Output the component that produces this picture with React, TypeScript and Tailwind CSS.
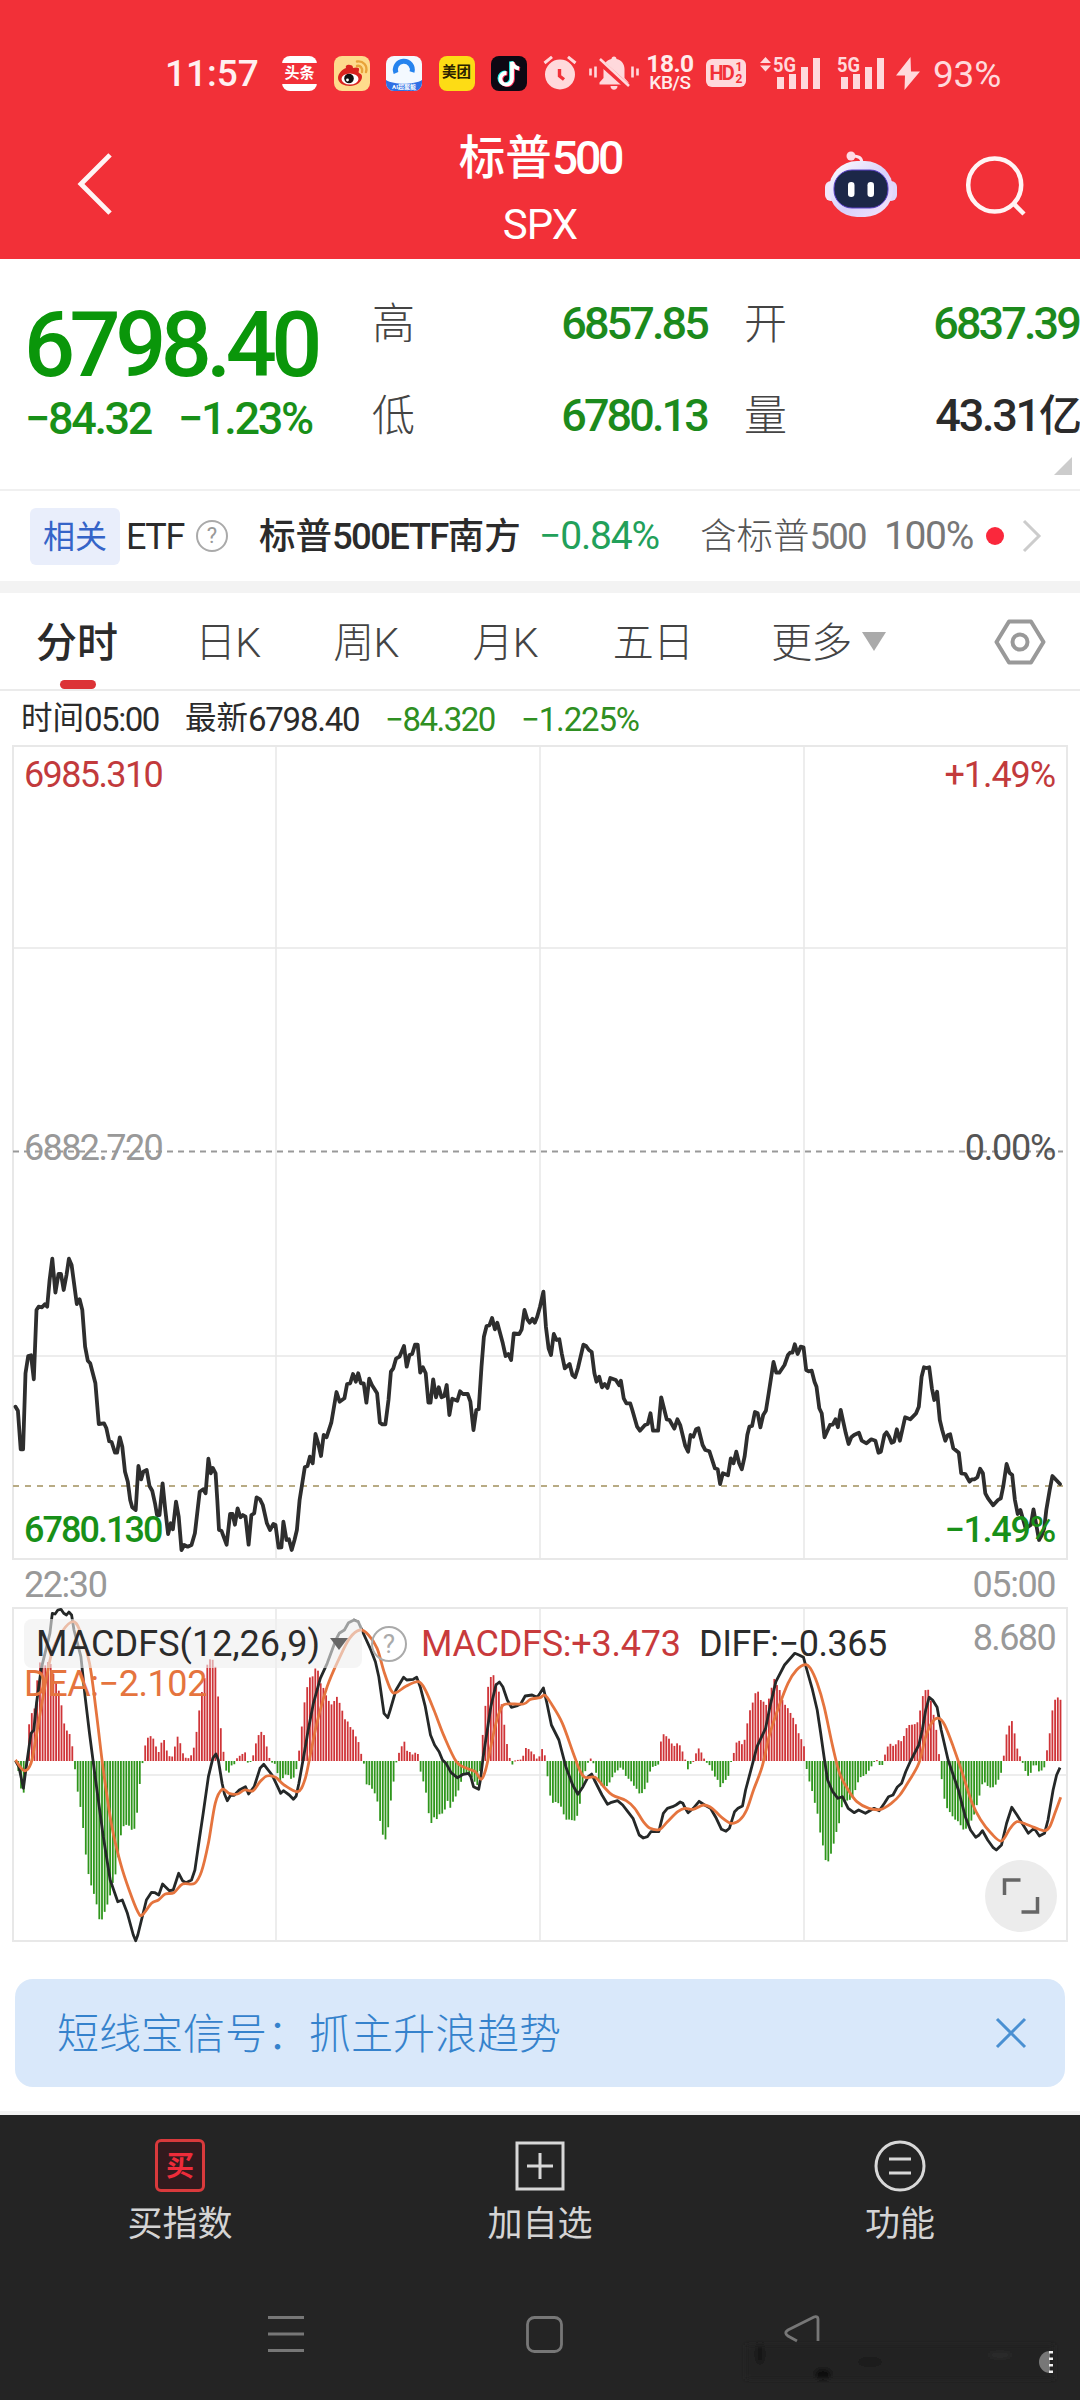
import type { ReactNode } from "react";

// trace points are "x,y" pairs; one unit is 1/2.904 px across and 1/3 px down
const HALF = 1568;
const SX = 1080 / 3136;
const SY = 1 / 3;

const priceAm =
  "45,620 52,632 60,748 67,748 74,520 82,468 90,466 98,538 106,330 112,320 122,322 130,313 137,320 144,240 152,176 161,278 170,222 177,222 185,270 193,225 200,176 208,195 223,312 231,298 239,330 247,440 255,482 262,490 277,550 287,672 302,670 309,685 317,724 324,726 334,758 340,758 348,712 355,740 363,815 371,845 378,900 384,922 394,930 402,798 410,838 416,815 426,810 434,858 442,872 450,910 456,945 463,945 472,850 480,930 488,1002 496,970 502,988 511,905 519,950 527,1050 535,1035 545,1040 556,1035 566,1000 580,875 590,868 597,880 605,776 612,820 618,804 626,820 631,900 636,990 643,992 658,1034 668,942 675,942 682,974 690,925 698,952 705,945 713,950 722,1034 730,945 738,940 745,892 755,898 763,915 775,970 784,990 794,972 800,975 809,1043 817,1042 823,965 832,1020 839,1018 847,1050 855,1020 862,990 870,900 885,802 893,798 900,770 908,790 916,702 924,730 932,768 940,705 948,712 962,668 977,576 986,605 1000,595 1008,552 1017,550 1025,522 1033,545 1040,520 1048,550 1056,550 1064,608 1072,536 1080,555 1095,580 1103,668 1110,673 1119,673 1128,600 1135,515 1142,505 1150,476 1160,470 1173,438 1181,500 1189,465 1197,462 1205,434 1213,434 1220,518 1228,502 1236,520 1244,608 1250,608 1258,538 1266,592 1274,562 1282,592 1290,588 1297,555 1305,645 1313,596 1328,602 1336,574 1344,582 1358,582 1366,605 1375,690 1383,630 1390,628 1398,500 1405,410 1413,378 1421,376 1429,354 1437,388 1444,368 1460,430 1468,468 1476,462 1484,480 1492,400 1508,402 1515,388 1523,330 1531,358 1538,368 1546,356 1553,368 1560,350";
const pricePm =
  "0,320 10,275 17,380 25,445 32,465 40,402 48,420 56,418 63,460 72,505 86,492 94,525 102,532 110,505 126,434 134,438 142,450 150,456 158,520 164,545 172,530 180,562 188,552 196,564 204,534 220,540 230,556 235,542 243,595 251,610 262,610 268,630 282,680 290,692 305,675 313,672 321,640 328,692 343,692 352,592 368,658 376,660 390,686 399,658 407,675 422,738 430,755 437,705 445,710 453,688 460,685 472,735 480,750 492,754 508,805 516,808 523,852 531,820 546,826 554,775 562,790 570,755 578,790 586,808 594,770 602,705 608,680 616,678 624,636 632,640 640,682 648,645 656,632 664,580 678,486 686,518 695,518 710,495 720,465 726,458 733,458 740,433 748,462 757,440 765,442 773,510 780,514 789,512 797,545 803,560 811,625 818,640 826,712 842,675 850,674 858,658 865,682 873,630 888,700 896,732 904,712 912,705 926,698 934,722 948,730 962,718 974,722 983,758 990,755 1000,705 1006,697 1014,710 1021,728 1028,725 1036,688 1045,722 1060,652 1075,658 1092,640 1100,620 1108,530 1115,502 1122,504 1130,502 1138,565 1145,600 1153,575 1161,660 1168,690 1177,722 1184,705 1191,703 1200,745 1216,758 1223,820 1235,822 1247,845 1254,838 1262,838 1270,832 1278,806 1286,820 1293,880 1301,895 1316,916 1330,900 1338,895 1345,860 1355,792 1363,818 1371,825 1379,900 1387,942 1395,930 1410,985 1425,975 1433,928 1441,975 1449,1020 1457,1005 1464,985 1470,930 1480,870 1488,828 1510,852";

const histAm =
  "45,513 52,535 60,590 67,630 74,545 79,513 82,420 90,365 98,380 106,290 114,215 122,225 130,228 144,210 152,240 160,270 168,290 176,325 184,390 191,420 199,424 207,445 215,510 223,590 230,630 238,678 246,765 254,838 262,876 270,905 278,925 286,983 293,997 301,975 309,950 317,932 325,885 333,865 341,825 348,752 356,710 372,702 380,718 387,722 395,708 403,605 410,550 417,493 425,447 433,440 441,437 448,452 456,480 464,490 472,435 480,462 488,498 503,500 511,450 519,433 527,480 535,498 543,508 550,502 558,492 566,460 574,400 582,330 590,285 597,250 605,208 613,208 620,210 628,240 636,360 644,445 652,510 660,563 667,540 675,520 683,524 690,498 698,497 706,490 714,486 722,532 729,510 737,492 745,450 753,430 761,424 769,440 776,478 784,511 792,520 800,522 808,560 816,580 823,560 831,552 839,556 847,570 855,560 862,532 866,510 870,465 878,395 886,320 894,282 902,255 909,260 917,230 925,245 933,290 941,295 948,320 956,335 964,345 972,330 980,318 988,345 996,368 1003,392 1011,395 1019,415 1027,420 1035,445 1043,460 1050,498 1057,522 1064,583 1072,585 1080,596 1088,610 1096,635 1104,695 1111,733 1119,750 1127,714 1135,632 1143,574 1150,520 1158,490 1166,470 1173,450 1181,482 1189,485 1197,494 1205,488 1213,490 1218,512 1220,540 1228,570 1236,600 1244,665 1251,704 1259,680 1267,690 1275,673 1283,672 1291,662 1299,630 1306,657 1314,638 1322,622 1330,605 1338,578 1346,555 1354,553 1362,555 1370,562 1378,575 1386,585 1393,555 1398,480 1406,380 1414,305 1422,270 1430,247 1438,270 1446,295 1454,325 1461,375 1469,445 1477,488 1485,530 1493,512 1501,510 1517,508 1524,474 1532,474 1540,483 1548,487 1556,505 1563,507";
const histPm =
  "2,490 10,465 17,520 25,585 33,640 48,635 56,642 64,655 72,685 80,692 88,686 96,694 104,690 112,665 119,622 127,565 135,527 143,511 150,502 158,530 166,560 174,585 190,592 198,585 206,570 214,553 222,542 230,540 237,526 245,550 253,565 262,568 270,585 278,592 291,615 300,605 308,590 316,565 322,532 330,530 338,527 346,522 350,458 358,432 366,438 374,445 382,460 390,468 398,460 406,466 414,485 422,510 430,540 438,520 446,512 453,490 461,475 469,488 476,505 484,518 492,525 500,542 508,560 516,570 523,592 531,580 539,570 547,558 555,513 562,492 570,458 578,452 586,463 594,450 601,405 609,363 617,340 625,310 633,304 641,330 649,335 657,345 665,325 672,295 680,266 688,285 696,300 704,330 712,345 720,355 728,370 736,385 744,405 751,430 759,448 767,470 773,530 781,570 789,598 797,635 805,665 812,720 820,757 828,808 835,820 843,798 851,770 859,730 867,710 875,655 883,635 891,632 899,630 907,625 914,605 922,580 930,562 945,555 953,545 961,532 970,515 978,510 986,525 994,525 1000,500 1008,472 1016,460 1024,468 1032,465 1040,450 1048,455 1056,440 1064,415 1072,405 1080,404 1090,402 1098,395 1106,348 1114,305 1122,298 1130,300 1138,350 1146,390 1154,440 1161,520 1169,590 1177,645 1185,660 1193,670 1201,685 1209,692 1217,695 1225,715 1233,722 1241,710 1249,695 1257,688 1265,655 1272,635 1280,600 1287,570 1295,582 1303,592 1312,593 1320,590 1328,575 1336,560 1341,540 1347,495 1355,430 1363,405 1371,392 1379,435 1387,482 1395,502 1403,522 1411,548 1419,560 1427,545 1435,520 1443,528 1450,548 1458,540 1466,530 1472,482 1480,430 1488,360 1496,328 1504,322 1512,330";

const diffAm =
  "45,512 55,530 68,595 75,540 90,430 98,420 106,340 120,235 145,130 152,70 160,72 168,60 177,58 185,70 193,75 200,66 208,75 215,120 235,200 247,320 260,430 275,550 300,740 320,870 342,935 355,930 370,970 387,1035 394,1052 400,1035 425,930 440,907 450,908 461,915 472,882 480,890 492,902 503,900 519,850 530,872 540,878 556,870 566,840 580,740 590,670 605,560 618,505 627,492 634,510 645,580 652,612 660,632 670,615 680,616 695,600 713,590 722,612 738,590 755,535 766,523 775,535 790,555 806,590 815,610 823,602 840,615 852,628 860,618 868,580 885,480 895,420 910,340 930,265 950,220 975,150 985,130 1000,120 1012,98 1028,90 1040,95 1055,130 1075,175 1090,215 1100,260 1115,370 1126,383 1133,360 1150,300 1172,262 1181,270 1200,268 1210,262 1220,290 1235,350 1250,435 1262,465 1275,485 1285,510 1295,520 1310,548 1328,563 1345,553 1360,550 1367,560 1375,590 1390,598 1395,570 1403,500 1415,420 1425,350 1440,285 1450,276 1460,290 1473,330 1485,352 1500,348 1512,342 1525,318 1545,315 1560,322";
const diffPm =
  "0,310 10,294 20,340 33,405 55,450 75,530 95,585 110,613 125,590 140,560 150,552 158,570 180,615 196,643 205,638 225,632 240,645 255,665 270,685 288,735 300,744 312,740 322,725 345,725 358,670 370,655 385,650 395,645 407,636 415,640 422,655 430,668 445,655 462,634 478,645 495,655 512,685 527,718 540,724 550,715 565,665 575,655 588,648 597,600 615,530 630,470 655,415 670,340 685,275 710,225 740,190 752,195 765,202 775,240 790,295 805,360 815,430 826,510 835,570 850,605 865,625 878,620 895,655 912,668 925,660 945,670 970,655 985,662 1000,640 1012,620 1025,615 1037,592 1050,580 1062,545 1075,515 1100,465 1110,420 1120,360 1130,322 1140,330 1153,352 1165,420 1185,510 1215,600 1235,680 1250,720 1265,742 1275,735 1285,722 1300,750 1315,772 1325,780 1340,765 1355,700 1370,652 1385,675 1400,700 1418,730 1435,715 1450,738 1465,730 1475,690 1490,600 1500,555 1510,533";

const deaAm =
  "45,510 70,542 90,520 105,440 125,320 150,190 180,125 213,95 235,130 260,220 280,370 300,540 325,710 350,820 375,900 400,965 413,975 440,940 460,930 480,912 505,908 530,882 565,880 585,845 605,760 625,640 645,598 665,610 690,612 710,600 735,602 755,575 775,558 800,562 825,585 865,605 885,570 900,500 920,400 950,290 985,205 1015,145 1045,120 1070,135 1095,175 1115,245 1135,300 1150,308 1180,288 1215,275 1235,300 1260,360 1290,440 1325,515 1355,535 1380,545 1397,568 1410,540 1425,470 1440,400 1455,355 1470,342 1520,342 1540,328";
const deaPm =
  "0,323 15,316 35,345 65,400 95,485 115,540 130,562 160,562 185,590 210,615 250,632 275,655 300,695 320,715 348,718 370,695 400,665 420,655 445,658 475,645 500,655 525,680 555,700 580,690 600,660 620,600 645,530 665,440 690,360 720,280 745,240 770,224 785,235 805,280 825,350 850,470 870,550 895,600 920,635 955,655 990,658 1020,640 1045,615 1070,575 1100,520 1120,440 1140,395 1158,385 1175,405 1200,470 1225,545 1255,640 1280,690 1310,730 1340,753 1365,715 1385,695 1410,702 1435,712 1465,722 1480,710 1495,670 1512,622";

type Pt = [number, number];

function toPts(am: string, pm: string): Pt[] {
  const parse = (s: string, dx: number) =>
    s.split(" ").map((p): Pt => {
      const [x, y] = p.split(",").map(Number);
      return [(x + dx) * SX, y * SY];
    });
  return [...parse(am, 0), ...parse(pm, HALF)];
}

const line = (pts: Pt[]) =>
  pts.map(([x, y]) => `${x.toFixed(1)},${y.toFixed(1)}`).join(" ");

// smooth path through the points
function curve(pts: Pt[]) {
  let d = `M${pts[0][0]},${pts[0][1]}`;
  for (let i = 1; i < pts.length; i++) {
    const p0 = pts[i - 2] ?? pts[i - 1];
    const p1 = pts[i - 1];
    const p2 = pts[i];
    const p3 = pts[i + 1] ?? p2;
    d += `C${p1[0] + (p2[0] - p0[0]) / 6},${p1[1] + (p2[1] - p0[1]) / 6} ${p2[0] - (p3[0] - p1[0]) / 6},${p2[1] - (p3[1] - p1[1]) / 6} ${p2[0]},${p2[1]}`;
  }
  return d;
}

const price = line(toPts(priceAm, pricePm));
const diff = line(toPts(diffAm, diffPm));
const dea = curve(toPts(deaAm, deaPm));

const BAR_STEP = 2.7;
const ZERO = 171;

// one bar per minute, height read off the histogram outline
const bars = (() => {
  const pts = toPts(histAm, histPm);
  const out: Pt[] = [];
  let j = 0;
  for (let x = 15.6; x < 1061; x += BAR_STEP) {
    while (j < pts.length - 2 && pts[j + 1][0] < x) j++;
    const [a, b] = [pts[j], pts[j + 1]];
    const t = Math.min(1, (x - a[0]) / (b[0] - a[0]));
    out.push([x, a[1] + (b[1] - a[1]) * t]);
  }
  return out;
})();

function StatusBar() {
  return (
    <div className="flex h-[94px] items-end pl-[165px] text-[#ffd9dc]">
      <div className="flex h-[42px] items-center">
        <span className="w-[117px] text-[37px] font-medium text-[#fff0f0]">11:57</span>
        <div className="flex items-center gap-[16.500px]">
          <div className="flex h-[35px] w-[35px] flex-col items-center justify-between overflow-hidden rounded-[8px]">
            <div className="h-[7px] w-full bg-white" />
            <span className="text-[15px] leading-[20px] font-bold text-white">头条</span>
            <div className="h-[7px] w-full bg-white" />
          </div>
          <svg className="h-[35px] w-[36px]" viewBox="0 0 36 35">
            <rect width="36" height="35" rx="8" fill="#fedb8c" />
            <path d="M4 22c0-5 5-9 8-10-1-2 1-4 4-3 2 0 3 1 3 3 3-1 7-1 6 2 0 1-1 2 0 3 3 1 3 3 3 4 0 5-6 9-12 9S4 27 4 22z" fill="#d9231f" />
            <ellipse cx="16" cy="23" rx="8.500" ry="5.500" fill="#fff" />
            <circle cx="15" cy="22.500" r="4.800" fill="#111" />
            <circle cx="13.500" cy="24" r="1.400" fill="#fff" />
            <path d="M23 10c3-1 6 2 5 6M23 5.500c6-1 11 4 9 10.500" fill="none" stroke="#e8a33a" strokeWidth="2.400" strokeLinecap="round" />
          </svg>
          <svg className="h-[35px] w-[36px]" viewBox="0 0 36 35">
            <rect width="36" height="35" rx="8" fill="#f4f9ff" />
            <path d="M0 24c8 5 28 5 36 0v3a8 8 0 0 1-8 8H8a8 8 0 0 1-8-8z" fill="#2f6fe4" />
            <path d="M10 17a8.500 8.500 0 1 1 16-1" fill="none" stroke="#2583ee" strokeWidth="5" />
            <text x="18" y="33" textAnchor="middle" fontSize="6" fontWeight="700" fill="#fff">AI超聚能</text>
          </svg>
          <div className="flex h-[35px] w-[36px] items-center justify-center rounded-[8px] bg-[#fddc15] text-[14.5px] font-bold text-[#2a2200]">
            美团
          </div>
          <svg className="h-[35px] w-[36px]" viewBox="0 0 36 35">
            <rect width="36" height="35" rx="8" fill="#0e0813" />
            <g fill="none" strokeWidth="3.800">
              <path d="M14.500 16.500a5.800 5.800 0 1 0 5.500 6V5.500c1 4 3.500 6 7 6.500" stroke="#25f4ee" />
              <path d="M16.500 17.500a5.800 5.800 0 1 0 5.500 6V6.500c1 4 3.500 6 7 6.500" stroke="#fe2c55" />
              <path d="M15.500 17a5.800 5.800 0 1 0 5.500 6V6c1 4 3.500 6 7 6.500" stroke="#fff" />
            </g>
          </svg>
        </div>
        <svg className="ml-[16px] h-[36px] w-[34px]" viewBox="0 0 34 36" fill="currentColor">
          <circle cx="17" cy="19.500" r="15" />
          <path d="M1.500 8 9 1.800M32.500 8 25 1.800" stroke="currentColor" strokeWidth="3" />
          <path d="M16.500 14v7l4.500 3.500" fill="none" stroke="#f23038" strokeWidth="3.400" />
        </svg>
        <svg className="ml-[12px] h-[36px] w-[50px]" viewBox="0 0 50 36" fill="currentColor">
          <path d="M25 1.500c1.500 0 2.500 1 2.500 2.500 5 1 8 5 8 10v9l4 4.500v2H10.500v-2l4-4.500v-9c0-5 3-9 8-10 0-1.500 1-2.500 2.500-2.500zM21.500 31h7c0 5-7 5-7 0z" />
          <path d="M10 6l30 27" stroke="#f23038" strokeWidth="6" />
          <path d="M11 4l29 27M1.500 13.500v7M6.500 11.500v11M43.500 11.500v11M48.500 13.500v7" stroke="currentColor" strokeWidth="2.600" />
        </svg>
        <div className="ml-[7px] flex w-[48px] flex-col items-center font-medium text-[#ffecec]">
          <span className="text-[24.500px] leading-[20px] font-bold tracking-[-0.02em]">18.0</span>
          <span className="text-[19px] leading-[18px] tracking-[-0.02em]">KB/S</span>
        </div>
        <div className="ml-[12px] flex h-[28px] w-[40px] items-center justify-center gap-px rounded-[6px] bg-[#ffd9dc] text-[#f23038]">
          <span className="w-[25px] text-[20px] font-bold tracking-[-0.09em]">HD</span>
          <span className="flex flex-col text-[12px] leading-[12px] font-bold">
            <span>1</span>
            <span>2</span>
          </span>
        </div>
        <Signal arrows className="ml-[14px] w-[61px]" />
        <Signal className="ml-[16px] w-[48px]" />
        <svg className="ml-[10px] h-[35px] w-[26px]" viewBox="0 0 26 35" fill="currentColor">
          <path d="M15.500 1 1 19.500h9L9.500 34 25 15.500h-9z" />
        </svg>
        <span className="ml-[12px] pt-[3px] text-[37px] tracking-[-0.005em]">93%</span>
      </div>
    </div>
  );
}

function Signal({ arrows, className }: { arrows?: boolean; className: string }) {
  const dx = arrows ? 13 : 0;
  return (
    <svg className={`h-[35px] overflow-visible ${className}`} viewBox={`0 0 ${48 + dx} 35`} fill="currentColor">
      {arrows && <path d="M0 7l5.500-6L11 7zM0 9.500h11l-5.500 6z" />}
      <text x={dx} y="15.500" fontSize="20" fontWeight="700" textLength="23" lengthAdjust="spacingAndGlyphs">5G</text>
      <g transform={`translate(${dx + 4} 0)`}>
        <rect x="0" y="21" width="7" height="12" />
        <rect x="12" y="18" width="7" height="15" />
        <rect x="24" y="11" width="7" height="22" />
        <rect x="36" y="2" width="7" height="31" />
      </g>
    </svg>
  );
}

function Header() {
  return (
    <div className="flex h-[164px] pt-px text-white">
      <div className="flex w-[360px] pt-[57px] pl-[77px]">
        <svg className="h-[64px] w-[37px]" viewBox="0 0 38 66" fill="none" stroke="#fff4f4" strokeWidth="5">
          <path d="M34 3 4 33l30 30" />
        </svg>
      </div>
      <div className="flex w-[360px] flex-col items-center">
        <div className="mt-[36px] flex h-[54px] items-center text-[46.500px] font-medium">
          标普<span className="tracking-[-0.07em]">500</span>
        </div>
        <div className="mt-[15px] text-[42px] leading-[50px] tracking-[-0.02em]">SPX</div>
      </div>
      <div className="flex w-[360px] pt-[55px] pl-[104px]">
        <svg className="h-[68px] w-[74px]" viewBox="0 0 74 68">
          <defs>
            <linearGradient id="head" x1="0" y1="0" x2="1" y2="1">
              <stop offset="0" stopColor="#fff" />
              <stop offset="0.550" stopColor="#d8d0fb" />
              <stop offset="1" stopColor="#f6e4fa" />
            </linearGradient>
          </defs>
          <path d="M38 14c0-7-4-8-10-8" fill="none" stroke="#fde5f0" strokeWidth="3" />
          <circle cx="27" cy="6" r="4.500" fill="#ffdbe6" />
          <rect x="1" y="31" width="12" height="20" rx="6" fill="#f3e6fa" />
          <rect x="61" y="31" width="12" height="20" rx="6" fill="#dfd6fa" />
          <rect x="5" y="11" width="64" height="56" rx="28" fill="url(#head)" />
          <rect x="10" y="20" width="54" height="38" rx="18" fill="#1c2748" stroke="#5a40c8" strokeWidth="1" />
          <rect x="24" y="32" width="6.500" height="15" rx="3.200" fill="#fff" />
          <rect x="43.500" y="32" width="6.500" height="15" rx="3.200" fill="#fff" />
        </svg>
        <svg className="mt-[5px] ml-[67px] h-[62px] w-[62px]" viewBox="0 0 62 62" fill="none" stroke="#fff4f4" strokeWidth="4.500">
          <circle cx="29.700" cy="30" r="26.500" />
          <path d="M48 48l11 11" />
        </svg>
      </div>
    </div>
  );
}

function Stat({ label, value, width, dark }: { label: string; value: ReactNode; width: string; dark?: boolean }) {
  return (
    <div className={`flex h-[92px] items-center justify-between ${width}`}>
      <span className="pt-[3px] text-[43px] font-light text-[#444]">{label}</span>
      <span
        className={`flex items-center text-[45px] font-medium whitespace-nowrap tracking-[-0.064em] ${dark ? "text-[#2b2b2b]" : "text-[#1c8a1c]"}`}
      >
        {value}
      </span>
    </div>
  );
}

function Quote() {
  return (
    <div className="relative flex h-[232px] border-b-2 border-[#f0f0f0] pt-[18px]">
      <div className="w-[372px] pl-[24px] font-medium whitespace-nowrap text-[#0a960a]">
        <div className="mt-[24px] text-[90px] leading-[90px] tracking-[-0.062em]">6798.40</div>
        <div className="mt-[2px] flex gap-[27px] pl-px text-[45px] leading-[52px] tracking-[-0.052em] text-[#189018]">
          <span>−84.32</span>
          <span>−1.23%</span>
        </div>
      </div>
      <div>
        <Stat label="高" value="6857.85" width="w-[335px]" />
        <Stat label="低" value="6780.13" width="w-[335px]" />
      </div>
      <div className="pl-[37px]">
        <Stat label="开" value="6837.39" width="w-[335px]" />
        <Stat
          label="量"
          dark
          width="w-[335px]"
          value={
            <>
              <span className="tracking-[-0.05em]">43.31</span>
              <span className="pt-[3px] text-[43px]">亿</span>
            </>
          }
        />
      </div>
      <svg className="absolute right-[8px] bottom-[14px] h-[18px] w-[18px]" viewBox="0 0 18 18">
        <path d="M18 0v18H0z" fill="#ccc" />
      </svg>
    </div>
  );
}

function EtfRow() {
  return (
    <div className="flex h-[90px] items-center pl-[30px] whitespace-nowrap text-[#2b2b2b]">
      <span className="flex h-[57px] w-[90px] shrink-0 items-center justify-center rounded-[6px] bg-[#e9eefb] pt-[2px] text-[32px] text-[#3564c8]">
        相关
      </span>
      <span className="ml-[6px] w-[70px] shrink-0 pt-[2px] text-[36px] tracking-[-0.04em]">ETF</span>
      <span className="flex h-[32px] w-[32px] shrink-0 items-center justify-center rounded-full border-2 border-[#aaa] text-[22px] text-[#999]">
        ?
      </span>
      <span className="ml-[31px] flex w-[280px] shrink-0 items-center pt-[2px] text-[36.500px] font-medium">
        标普<span className="tracking-[-0.045em]">500ETF</span>南方
      </span>
      <span className="w-[161px] shrink-0 text-[39px] tracking-[-0.03em] text-[#22a05a]">−0.84%</span>
      <span className="flex w-[184px] shrink-0 items-center pt-[2px] text-[36.500px] font-light text-[#555]">
        含标普<span className="font-normal tracking-[-0.05em] text-[#777]">500</span>
      </span>
      <span className="w-[102px] shrink-0 text-[39px] tracking-[-0.035em] text-[#777]">100%</span>
      <span className="h-[18px] w-[18px] shrink-0 rounded-full bg-[#fa283c]" />
      <svg className="ml-[18px] h-[34px] w-[20px] shrink-0" viewBox="0 0 20 34" fill="none" stroke="#ccc" strokeWidth="3">
        <path d="M2 2l15 15L2 32" />
      </svg>
    </div>
  );
}

const tabs = [
  { label: "日K", space: "ml-[77px]" },
  { label: "周K", space: "ml-[73px]" },
  { label: "月K", space: "ml-[74px]" },
  { label: "五日", space: "ml-[75px]" },
  { label: "更多", space: "ml-[78px]" },
];

function Tabs() {
  return (
    <div className="flex h-[98px] items-center border-t border-b-2 border-t-white border-b-[#ebebeb] pl-[36px] text-[41px] font-light text-[#444]">
      <div className="relative flex h-full items-center pt-[3px] font-medium text-[#2b2b2b]">
        分时
        <div className="absolute bottom-0 left-[24px] h-[9px] w-[36px] rounded-[5px] bg-[#dc3236]" />
      </div>
      {tabs.map((t) => (
        <div key={t.label} className={`pt-[3px] tracking-[-0.02em] ${t.space}`}>
          {t.label}
        </div>
      ))}
      <svg className="ml-[10px] h-[19px] w-[24px]" viewBox="0 0 24 19">
        <path d="M0 0h24L12 19z" fill="#aaa" />
      </svg>
      <svg className="mr-[34px] ml-auto h-[46px] w-[52px]" viewBox="0 0 52 46" fill="none" stroke="#999" strokeWidth="4">
        <path d="M15 2.500h22L49.500 23 37 43.500H15L2.500 23z" strokeLinejoin="round" />
        <circle cx="26" cy="23" r="7.500" />
      </svg>
    </div>
  );
}

function InfoLine() {
  return (
    <div className="flex h-[53px] items-center pt-[3px] pl-[21px] text-[31.5px] whitespace-nowrap text-[#2b2b2b]">
      <span className="flex w-[164px] items-center">
        时间<span className="text-[33px] tracking-[-0.045em]">05:00</span>
      </span>
      <span className="flex w-[200px] items-center">
        最新<span className="text-[33px] tracking-[-0.038em]">6798.40</span>
      </span>
      <span className="w-[136px] text-[33px] tracking-[-0.045em] text-[#2f8f22]">−84.320</span>
      <span className="text-[33px] tracking-[-0.035em] text-[#2f8f22]">−1.225%</span>
    </div>
  );
}

function PriceChart() {
  return (
    <div className="relative h-[817px] text-[36px] leading-[36px] tracking-[-0.045em]">
      <svg className="block h-[817px] w-[1080px]" viewBox="0 0 1080 817" fill="none">
        <g stroke="#e8e8e8" strokeWidth="2">
          <rect x="13" y="2" width="1054" height="813" />
          <path d="M276 2v813M540 2v813M804 2v813M13 204h1054M13 612h1054" strokeWidth="1.500" />
        </g>
        <path d="M13 407.500h1050" stroke="#999" strokeWidth="2" strokeDasharray="6 5" />
        <path d="M13 742h1050" stroke="#b8ab84" strokeWidth="2" strokeDasharray="6 6" />
        <polyline points={price} transform="translate(0 456)" stroke="#2e2e2e" strokeWidth="3.800" strokeLinejoin="round" strokeLinecap="round" />
      </svg>
      <div className="absolute inset-0 flex flex-col justify-between pt-[13px] pr-[25px] pb-[13px] pl-[24px]">
        <div className="flex justify-between text-[#c23a3c]">
          <span>6985.310</span>
          <span className="tracking-[-0.03em]">+1.49%</span>
        </div>
        <div className="flex justify-between pb-[9px] text-[#999]">
          <span>6882.720</span>
          <span className="tracking-[-0.035em] text-[#555]">0.00%</span>
        </div>
        <div className="flex justify-between font-medium text-[#189018]">
          <span className="tracking-[-0.055em]">6780.130</span>
          <span className="tracking-[-0.035em]">−1.49%</span>
        </div>
      </div>
    </div>
  );
}

function MacdChart() {
  return (
    <div className="relative h-[338px] text-[36px] leading-[36px] whitespace-nowrap">
      <svg className="block h-[338px] w-[1080px]" viewBox="0 0 1080 338" fill="none">
        <g stroke="#e8e8e8" strokeWidth="2">
          <rect x="13" y="2" width="1054" height="333" />
          <path d="M276 2v333M540 2v333M804 2v333M13 169h1054" strokeWidth="1.500" />
        </g>
        <g transform="translate(0 -16)">
          {bars.map(([x, y]) => (
            <rect
              key={x}
              x={x - 0.9}
              width="1.800"
              y={Math.min(y, ZERO)}
              height={Math.max(1, Math.abs(y - ZERO))}
              fill={y <= ZERO ? "#cf3438" : "#2f961c"}
            />
          ))}
          <polyline points={diff} stroke="#252828" strokeWidth="2.800" strokeLinejoin="round" />
          <path d={dea} stroke="#e5743e" strokeWidth="2.800" />
        </g>
      </svg>
      <div className="absolute top-[13px] left-[24px] flex items-center">
        <div className="flex h-[49px] w-[338px] items-center rounded-[8px] bg-[#eeeeee]/60 pl-[12px] text-[#2b2b2b]">
          <span className="tracking-[0.001em]">MACDFS(12,26,9)</span>
          <svg className="ml-[10px] h-[12px] w-[18px]" viewBox="0 0 18 12">
            <path d="M0 0h18l-9 12z" fill="#666" />
          </svg>
        </div>
        <span className="ml-[9px] flex h-[36px] w-[36px] items-center justify-center rounded-full border-2 border-[#aaa] text-[26px] text-[#aaa]">
          ?
        </span>
        <span className="ml-[14px] w-[278px] tracking-[-0.007em] text-[#c83a3c]">MACDFS:+3.473</span>
        <span className="tracking-[-0.013em] text-[#2b2b2b]">DIFF:−0.365</span>
      </div>
      <span className="absolute top-[60px] left-[24px] tracking-[-0.012em] text-[#e5743e]">DEA:−2.102</span>
      <span className="absolute top-[14px] right-[25px] tracking-[-0.045em] text-[#999]">8.680</span>
      <div className="absolute right-[23px] bottom-[12px] flex h-[72px] w-[72px] items-center justify-center rounded-full bg-[#ececec]">
        <svg className="h-[38px] w-[38px]" viewBox="0 0 38 38" fill="none" stroke="#666" strokeWidth="3.500">
          <path d="M2.500 18V3h16M35.500 20v15h-16" />
        </svg>
      </div>
    </div>
  );
}

function Action({ label, icon }: { label: string; icon: ReactNode }) {
  return (
    <div className="flex w-[360px] flex-col items-center pt-[24px] text-[35px] leading-[40px] text-[#d4d4d4]">
      {icon}
      <span className="mt-[13px]">{label}</span>
    </div>
  );
}

function BottomBar() {
  return (
    <div className="h-[285px] bg-[#242424]">
      <div className="flex h-[190px]">
        <Action
          label="买指数"
          icon={
            <span className="flex h-[53px] w-[50px] items-center justify-center rounded-[6px] border-[3px] border-[#d93a3c] bg-[#321a1e] pt-[2px] text-[28px] font-bold text-[#ee2c3a]">
              买
            </span>
          }
        />
        <Action
          label="加自选"
          icon={
            <svg className="h-[53px] w-[52px]" viewBox="0 0 52 53" fill="none" stroke="#d8d8d8" strokeWidth="3">
              <rect x="3" y="4" width="46" height="46" />
              <path d="M26 14v26M13 27h26" />
            </svg>
          }
        />
        <Action
          label="功能"
          icon={
            <svg className="h-[53px] w-[52px]" viewBox="0 0 52 53" fill="none" stroke="#d8d8d8" strokeWidth="3">
              <circle cx="26" cy="27" r="24" />
              <path d="M15 20h22M15 34h22" />
            </svg>
          }
        />
      </div>
      <svg className="block h-[95px] w-[1080px]" viewBox="0 0 1080 95" fill="none" stroke="#777" strokeWidth="2.800">
        <defs>
          <filter id="soft">
            <feGaussianBlur stdDeviation="2.500" />
          </filter>
        </defs>
        <path d="M268 12.500h36M268 29h36M268 45.500h36" />
        <rect x="527.500" y="12.500" width="34" height="34" rx="7" />
        <path d="M797 36l-9-5c-3-2-3-4 0-6l26-13c2-1 4 0 4 2v22" />
        {/* faint strip under the back key */}
        <g stroke="none" filter="url(#soft)">
          <rect x="746" y="40" width="308" height="34" fill="#212121" />
          <ellipse cx="760" cy="49" rx="4" ry="10" fill="#181818" />
          <ellipse cx="823" cy="69" rx="8" ry="5" fill="#080808" />
          <ellipse cx="870" cy="57" rx="12" ry="5" fill="#1c1c1c" />
          <ellipse cx="1000" cy="50" rx="12" ry="2" fill="#303030" />
        </g>
        <path d="M1050 46a11 11 0 0 0 0 22z" fill="#777" stroke="none" />
        <path d="M1051 46v24" stroke="#eee" strokeWidth="4" strokeDasharray="2.500 4" />
      </svg>
    </div>
  );
}

export default function App() {
  return (
    <main className="h-[2400px] w-[1080px] overflow-hidden bg-white font-[Roboto,'Noto_Sans_CJK_SC',sans-serif] leading-none text-[#2b2b2b]">
      <div className="h-[259px] bg-[#f23038]">
        <StatusBar />
        <Header />
      </div>
      <Quote />
      <EtfRow />
      <div className="h-[12px] bg-[#f3f3f3]" />
      <Tabs />
      <InfoLine />
      <PriceChart />
      <div className="flex h-[45px] items-center justify-between pt-[2px] pr-[25px] pl-[24px] text-[36px] tracking-[-0.04em] text-[#999]">
        <span>22:30</span>
        <span>05:00</span>
      </div>
      <MacdChart />
      <div className="mx-[15px] mt-[35px] flex h-[108px] items-center justify-between rounded-[18px] bg-[#d9e8fa] pr-[38px] pl-[42px] text-[42px] text-[#4a90d2]">
        <span className="pt-[4px] font-light text-[#3582cc]">短线宝信号：抓主升浪趋势</span>
        <svg className="h-[32px] w-[32px]" viewBox="0 0 32 32" fill="none" stroke="currentColor" strokeWidth="3">
          <path d="M2 2l28 28M30 2 2 30" />
        </svg>
      </div>
      <div className="mt-[24px] h-[4px] bg-[#f3f3f3]" />
      <BottomBar />
    </main>
  );
}
